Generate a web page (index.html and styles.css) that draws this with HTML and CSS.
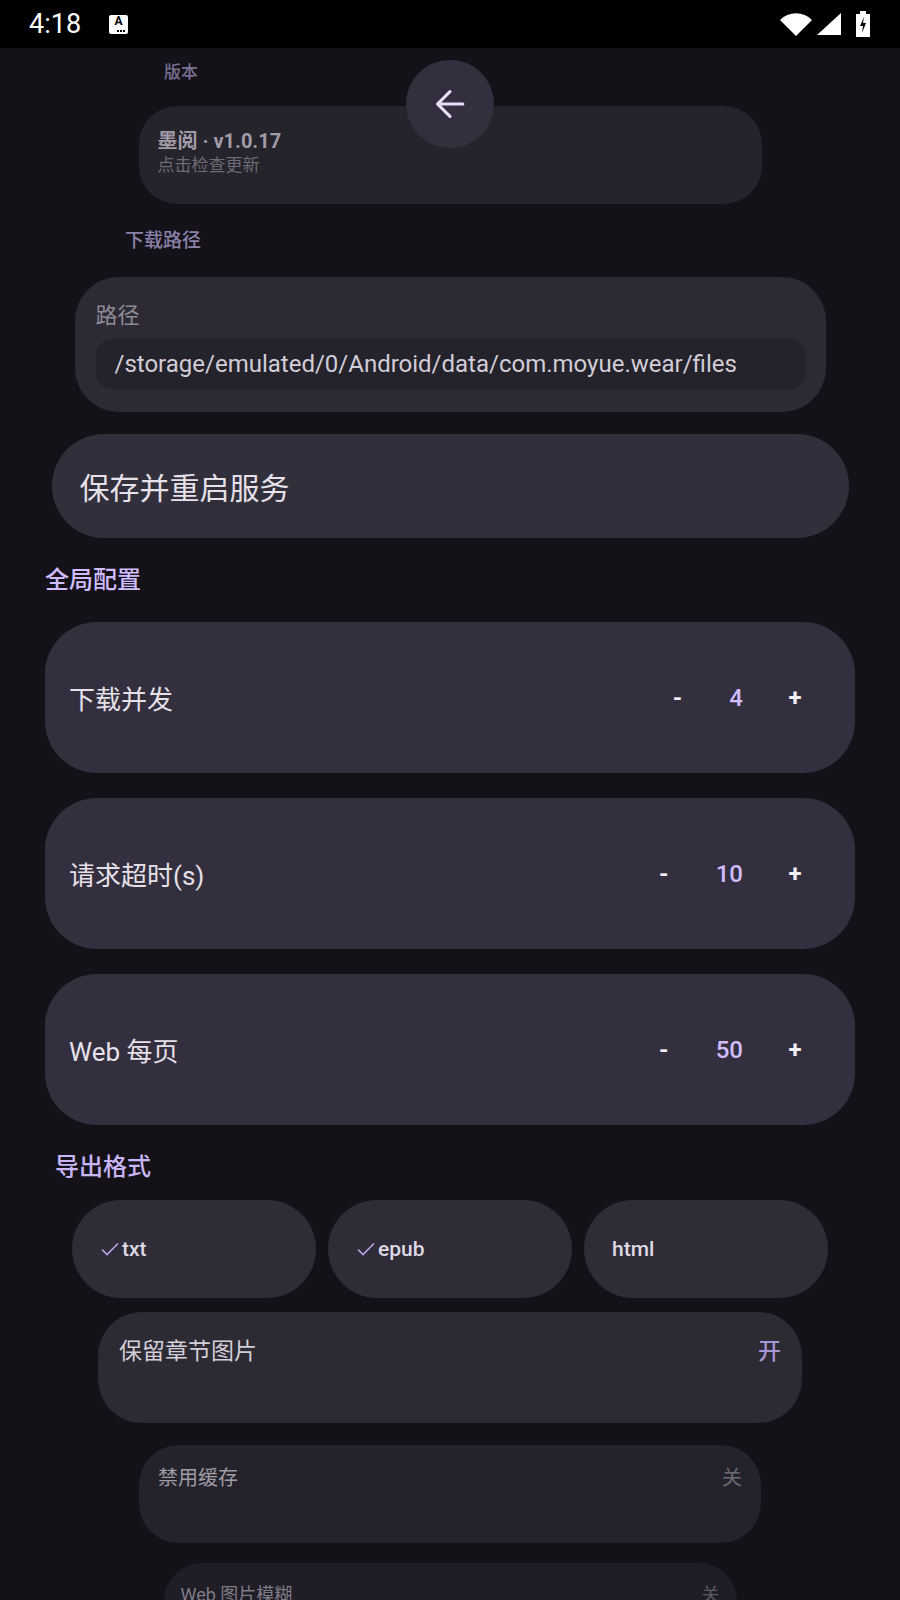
FILE: index.html
```html
<!DOCTYPE html>
<html lang="zh-CN">
<head>
    <meta charset="UTF-8">
    <meta name="viewport" content="width=device-width, initial-scale=1.0">
    <title>墨阅 设置</title>
    <link rel="stylesheet" href="styles.css">
</head>
<body>
    <div class="status-bar">
        <span class="clock">4:18</span>
        <span class="status-a">A<i></i></span>
        <div class="status-icons">
            <svg class="ic-wifi" width="32" height="24" viewBox="0 0 32 24"><path d="M16 24 L0 8 A22.6 22.6 0 0 1 32 8 Z" fill="#fff"/></svg>
            <svg class="ic-signal" width="24" height="22" viewBox="0 0 24 22"><path d="M0 22 L24 22 L24 0 Z" fill="#fff"/></svg>
            <svg class="ic-battery" width="14" height="26" viewBox="0 0 14 26"><path d="M4 0h6v3h4v23H0V3h4z" fill="#fff"/><path d="M8 6 L4 15 H7 L6 22 L10 12 H7 Z" fill="#000"/></svg>
        </div>
    </div>

    <main class="screen">
        <button class="back-btn">
            <svg width="44" height="44" viewBox="0 0 24 24"><path d="M19 12H5.5M12 5.2L5.2 12 12 18.8" fill="none" stroke="#e8def8" stroke-width="1.7" stroke-linecap="round" stroke-linejoin="round"/></svg>
        </button>

        <div class="label label-version">版本</div>
        <div class="version-card">
            <div class="version-title">墨阅 · v1.0.17</div>
            <div class="version-sub">点击检查更新</div>
        </div>

        <div class="label label-path">下载路径</div>
        <div class="path-card">
            <div class="field-label">路径</div>
            <div class="field-input">/storage/emulated/0/Android/data/com.moyue.wear/files</div>
        </div>

        <div class="save-btn">保存并重启服务</div>

        <div class="section-title">全局配置</div>
        <div class="stepper-card">
            <span class="stepper-name">下载并发</span>
            <div class="stepper">
                <span class="step-btn">-</span>
                <span class="step-val">4</span>
                <span class="step-btn">+</span>
            </div>
        </div>
        <div class="stepper-card">
            <span class="stepper-name">请求超时(s)</span>
            <div class="stepper">
                <span class="step-btn">-</span>
                <span class="step-val">10</span>
                <span class="step-btn">+</span>
            </div>
        </div>
        <div class="stepper-card">
            <span class="stepper-name">Web 每页</span>
            <div class="stepper">
                <span class="step-btn">-</span>
                <span class="step-val">50</span>
                <span class="step-btn">+</span>
            </div>
        </div>

        <div class="section-title export-title">导出格式</div>
        <div class="chip-row">
            <div class="chip"><svg class="check" width="18" height="14" viewBox="0 0 18 14"><path d="M1 7.5L6 12.5L17 1.5" fill="none" stroke="#b8a4e6" stroke-width="1.6"/></svg>txt</div>
            <div class="chip"><svg class="check" width="18" height="14" viewBox="0 0 18 14"><path d="M1 7.5L6 12.5L17 1.5" fill="none" stroke="#b8a4e6" stroke-width="1.6"/></svg>epub</div>
            <div class="chip">html</div>
        </div>

        <div class="toggle-card toggle-images">
            <span>保留章节图片</span>
            <span class="toggle-state on">开</span>
        </div>
        <div class="toggle-card toggle-cache">
            <span>禁用缓存</span>
            <span class="toggle-state">关</span>
        </div>
        <div class="toggle-card toggle-blur">
            <span>Web 图片模糊</span>
            <span class="toggle-state">关</span>
        </div>
    </main>
</body>
</html>
```

FILE: styles.css
```css
body {
    margin: 0;
    height: 1600px;
    overflow: hidden;
    background-color: #141218;
    font-family: Roboto, "Noto Sans CJK SC", sans-serif;
    color: #e6e0e9;
}
.status-bar {
    height: 48px;
    background: #000;
    color: #fff;
    display: flex;
    align-items: center;
    padding: 0 30px 0 29px;
}
.clock {
    font-size: 27px;
    line-height: 1;
}
.status-a {
    position: relative;
    margin-left: 28px;
    width: 19px;
    height: 19px;
    background: #fff;
    border-radius: 2px;
    color: #000;
    font-size: 12px;
    font-weight: 700;
    line-height: 13px;
    text-align: center;
}
.status-a i {
    position: absolute;
    left: 8px;
    bottom: 2px;
    width: 8px;
    height: 2px;
    background: repeating-linear-gradient(90deg, #000 0 2px, transparent 2px 3px);
}
.status-icons {
    margin-left: auto;
    display: flex;
    align-items: center;
}
.ic-signal {
    margin-left: 5px;
}
.ic-battery {
    margin-left: 15px;
}
.screen {
    position: relative;
    display: flow-root;
}
.back-btn {
    position: absolute;
    top: 12px;
    left: 406px;
    width: 88px;
    height: 88px;
    border: none;
    border-radius: 50%;
    background: #332f3e;
    padding: 0;
    display: flex;
    align-items: center;
    justify-content: center;
}
.label {
    font-weight: 500;
}
.label-version {
    margin: 14px 0 0 164px;
    font-size: 17px;
    line-height: 20px;
    color: #7a7094;
}
.version-card {
    width: 623px;
    height: 98px;
    margin: 24px auto 0;
    box-sizing: border-box;
    padding: 23px 19px 0;
    background: #25232b;
    border-radius: 38px;
}
.version-title {
    font-size: 20px;
    line-height: 24px;
    font-weight: 700;
    color: #a19ca8;
}
.version-sub {
    margin-top: 2px;
    font-size: 17px;
    line-height: 20px;
    color: #6e6a76;
}
.label-path {
    margin: 25px 0 0 125px;
    font-size: 19px;
    line-height: 24px;
    color: #8b80aa;
}
.path-card {
    width: 751px;
    height: 135px;
    margin: 24px auto 0;
    box-sizing: border-box;
    padding: 26px 21px 0;
    background: #2d2a35;
    border-radius: 44px;
}
.field-label {
    font-size: 22px;
    line-height: 26px;
    color: #8e8996;
}
.field-input {
    margin-top: 10px;
    height: 50px;
    box-sizing: border-box;
    padding: 0 19px;
    display: flex;
    align-items: center;
    background: #24222a;
    border-radius: 16px;
    font-size: 24px;
    color: #d2cdd8;
    white-space: nowrap;
}
.save-btn {
    width: 797px;
    height: 104px;
    margin: 22px auto 0;
    box-sizing: border-box;
    padding-left: 28px;
    display: flex;
    align-items: center;
    background: #322f3c;
    border-radius: 52px;
    font-size: 30px;
    color: #e6e0e9;
}
.section-title {
    margin: 28px 0 0 45px;
    font-size: 24px;
    line-height: 29px;
    font-weight: 500;
    color: #d0bcff;
}
.stepper-card {
    width: 810px;
    height: 151px;
    margin: 27px auto 0;
    box-sizing: border-box;
    padding: 0 40px 0 24px;
    display: flex;
    align-items: center;
    justify-content: space-between;
    background: #332f3e;
    border-radius: 52px;
}
.stepper-card + .stepper-card {
    margin-top: 25px;
}
.stepper-name {
    font-size: 26px;
    color: #e6e0e9;
}
.stepper {
    display: flex;
    align-items: center;
    gap: 32px;
}
.step-btn {
    width: 40px;
    text-align: center;
    font-size: 24px;
    font-weight: 700;
    color: #f2eef6;
}
.step-val {
    font-size: 24px;
    font-weight: 500;
    color: #d0bcff;
}
.export-title {
    margin-left: 55px;
    font-size: 24px;
    line-height: 28px;
    color: #c9b5f5;
}
.chip-row {
    width: 756px;
    margin: 19px auto 0;
    display: grid;
    grid-template-columns: repeat(3, 1fr);
    gap: 12px;
}
.chip {
    height: 98px;
    box-sizing: border-box;
    padding-left: 28px;
    display: flex;
    align-items: center;
    background: #2f2c38;
    border-radius: 49px;
    font-size: 21px;
    font-weight: 500;
    color: #ddd8e3;
}
.chip .check {
    margin: 0 3px 0 1px;
}
.toggle-card {
    margin: 0 auto;
    box-sizing: border-box;
    display: flex;
    justify-content: space-between;
    align-items: flex-start;
}
.toggle-images {
    width: 704px;
    height: 111px;
    margin-top: 14px;
    padding: 26px 21px 0;
    background: #2c2a33;
    border-radius: 44px;
    font-size: 23px;
    line-height: 28px;
    color: #d3ced9;
}
.toggle-cache {
    width: 622px;
    height: 98px;
    margin-top: 22px;
    padding: 21px 19px 0;
    background: #24222a;
    border-radius: 40px;
    font-size: 20px;
    line-height: 24px;
    color: #a09ba7;
}
.toggle-blur {
    width: 573px;
    height: 90px;
    margin-top: 20px;
    padding: 21px 17px 0;
    background: #1f1d25;
    border-radius: 38px;
    font-size: 18px;
    line-height: 22px;
    color: #807b88;
}
.toggle-state {
    color: #6c6875;
}
.toggle-state.on {
    color: #a593d6;
    font-weight: 500;
}
.toggle-blur .toggle-state {
    color: #5d5966;
}
```
